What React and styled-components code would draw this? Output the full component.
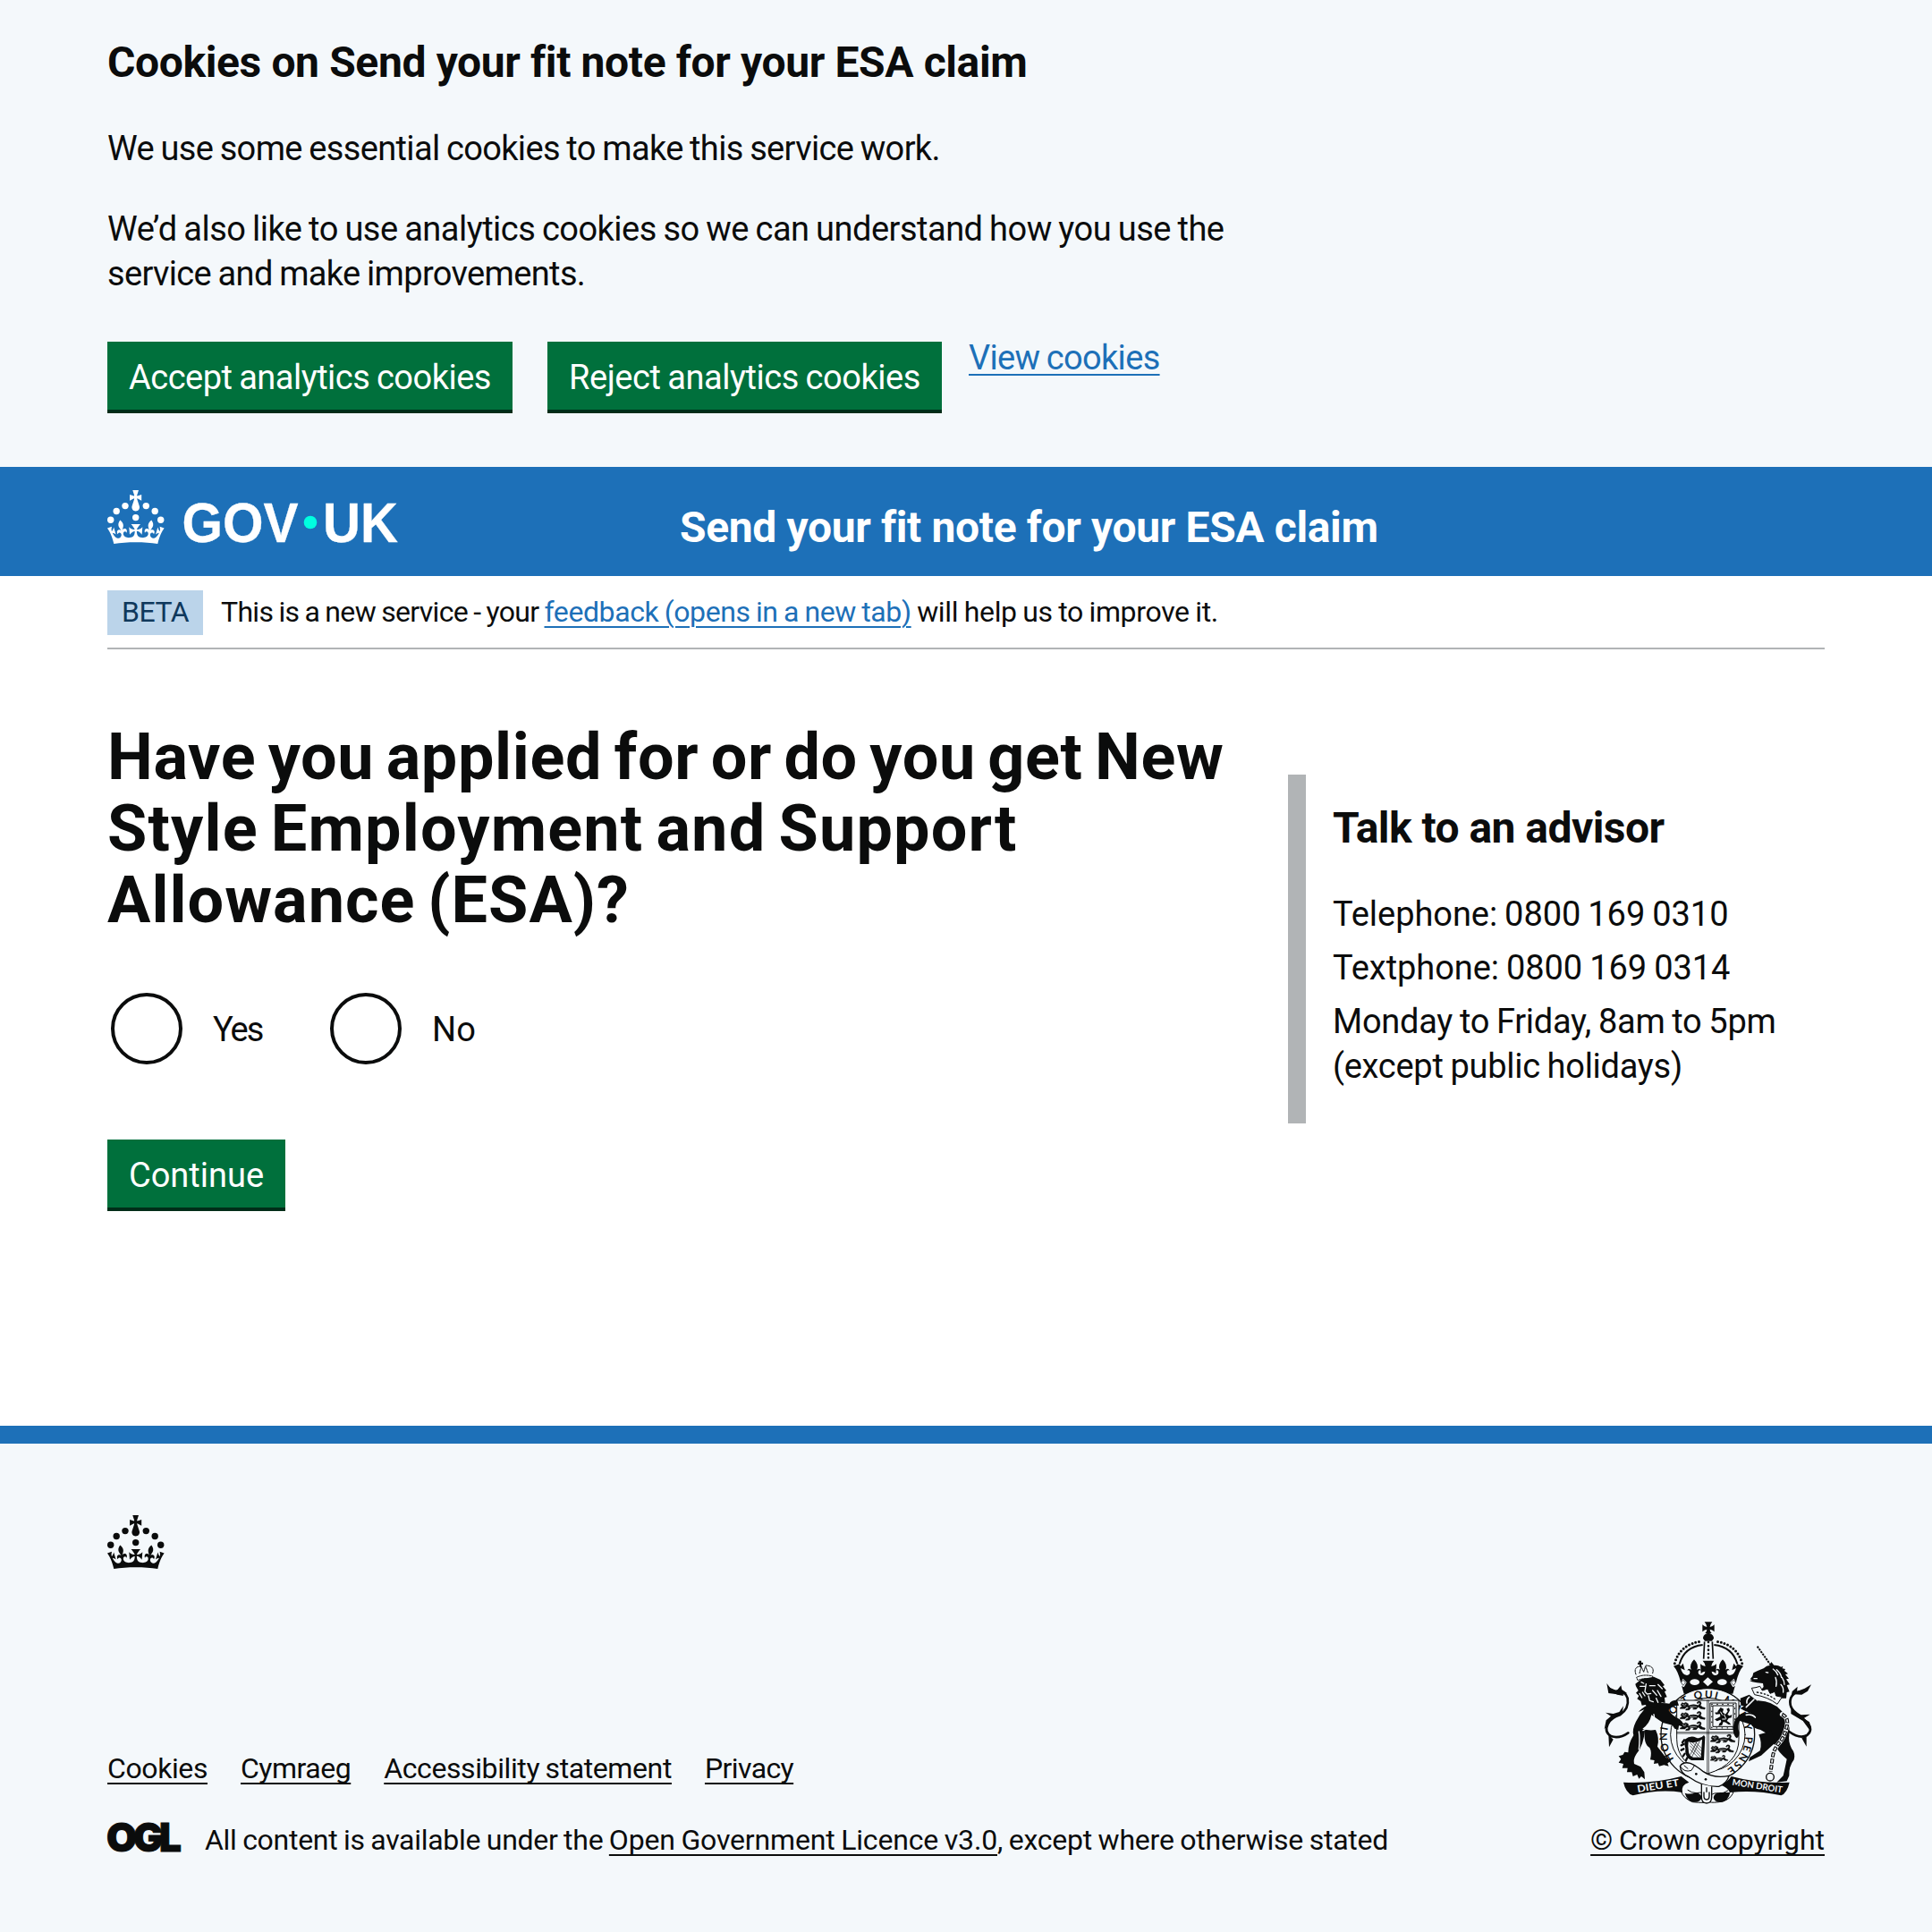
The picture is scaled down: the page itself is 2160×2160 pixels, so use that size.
import React from 'react';
import styled, { createGlobalStyle } from 'styled-components';

const c = {
  ink: '#0b0c0c',
  blue: '#1d70b8',
  pale: '#f4f8fb',
  green: '#00703c',
  greenShadow: '#002d18',
  grey: '#b1b4b6',
};

const GlobalStyle = createGlobalStyle`
  *, *::before, *::after { box-sizing: border-box; }
  body {
    margin: 0;
    background: ${c.pale};
    color: ${c.ink};
    font-family: Roboto, "Liberation Sans", Arial, sans-serif;
    -webkit-font-smoothing: antialiased;
  }
  h1, h2, p, ul { margin: 0; padding: 0; }
`;

const Container = styled.div`
  width: 1920px;
  margin: 0 auto;
`;

/* Keeps a run of text on one line with its own tracking. */
const Run = styled.span`
  display: ${(p) => (p.$block ? 'block' : 'inline')};
  letter-spacing: ${(p) => p.$track || 0}px;
  word-spacing: calc(var(--word-gap, -0.035) * 1em);
  white-space: pre;
`;

const BodyText = styled.p`
  padding-top: 1px;
  font-size: 38px;
  line-height: 50px;
  margin-bottom: ${(p) => (p.$gap ?? 40) - 1}px;
`;

const HeadingM = styled.h2`
  --word-gap: 0;
  font-size: 48px;
  line-height: 60px;
  font-weight: 700;
  margin-bottom: 40px;
`;

const HeadingXL = styled.h1`
  --word-gap: -0.07;
  padding-top: 1px;
  font-size: 72px;
  line-height: 80px;
  font-weight: 700;
  margin-bottom: 59px;
`;

const Link = styled.a`
  color: ${(p) => (p.$dark ? c.ink : c.blue)};
  text-decoration: underline;
  text-decoration-thickness: 2px;
  text-underline-offset: 5px;
  text-decoration-skip-ink: ${(p) => (p.$dark ? 'none' : 'auto')};
  letter-spacing: ${(p) => p.$track || 0}px;
  word-spacing: -0.035em;
  white-space: nowrap;
`;

const Button = styled.button`
  width: ${(p) => p.$width}px;
  height: 76px;
  padding: 3px 0 0;
  border: 0;
  border-radius: 0;
  background: ${c.green};
  box-shadow: 0 4px 0 ${c.greenShadow};
  color: #fff;
  font: 400 38px/38px Roboto, "Liberation Sans", Arial, sans-serif;
  letter-spacing: ${(p) => p.$track || 0}px;
  word-spacing: -0.035em;
  white-space: nowrap;
`;

const CookieBanner = styled.section`
  height: 522px;
  padding-top: 40px;
  background: ${c.pale};
`;

const ButtonGroup = styled.div`
  display: flex;
  align-items: flex-start;
  padding-top: 12px;
  font-size: 38px;
  line-height: 50px;

  ${Button} + ${Button} { margin-left: 39px; }
  ${Link} { margin: -7px 0 0 30px; }
`;

const Header = styled.header`
  height: 122px;
  background: ${c.blue};
  color: #fff;
`;

const HeaderRow = styled(Container)`
  display: flex;
  align-items: flex-start;
  padding-top: 26px;
`;

const Logo = styled.svg`
  display: block;
  overflow: visible;
  fill: currentColor;
`;

const ServiceName = styled.div`
  --word-gap: 0;
  margin: 12px 0 0 316px;
  font-size: 48px;
  line-height: 60px;
  font-weight: 700;
`;

const Page = styled.div`
  height: 950px;
  background: #fff;
`;

const PhaseBanner = styled.div`
  display: flex;
  align-items: flex-start;
  height: 82px;
  padding-top: 16px;
  border-bottom: 2px solid ${c.grey};
  font-size: 32px;
`;

const Tag = styled.strong`
  width: 107px;
  height: 50px;
  padding-left: 16px;
  background: #bbd4ea;
  color: #0f385c;
  font-weight: 400;
  line-height: 48px;
`;

const PhaseText = styled.p`
  margin: 4px 0 0 20px;
  line-height: 40px;
`;

const Columns = styled.main`
  display: grid;
  grid-template-columns: 1260px 600px;
  column-gap: 60px;
  padding-top: 80px;
`;

const Radios = styled.div`
  display: flex;
  gap: 36px;
  margin-bottom: 80px;
`;

const Radio = styled.label`
  display: flex;
  align-items: center;
  width: 209px;
  height: 88px;
  padding-left: 4px;
  font-size: 38px;
  line-height: 50px;

  ${Run} { padding-top: 2px; }
`;

const Dial = styled.span`
  width: 80px;
  height: 80px;
  margin-right: 34px;
  border: 4px solid ${c.ink};
  border-radius: 50%;
`;

const Aside = styled.aside`
  height: 390px;
  margin-top: 60px;
  padding: 30px 0 0 30px;
  border-left: 20px solid ${c.grey};
`;

const Footer = styled.footer`
  height: 566px;
  padding-top: 80px;
  border-top: 20px solid ${c.blue};
  background: ${c.pale};
`;

const FooterRow = styled.div`
  display: flex;
  justify-content: space-between;
  align-items: flex-end;
  margin-top: 46px;
  font-size: 32px;
  line-height: 40px;
`;

const FooterLinks = styled.div`
  display: flex;
  gap: 37px;
  margin-bottom: 40px;
`;

const Licence = styled.div`
  display: flex;
  align-items: flex-start;

  p { margin-left: 27px; }
`;

const Copyright = styled.div`
  display: flex;
  flex-direction: column;
  align-items: center;

  svg { display: block; margin: 0 0 7px; }
`;

function Crown() {
  return (
    <g>
      <circle cx="20" cy="17.6" r="3.7" />
      <circle cx="10.2" cy="23.5" r="3.7" />
      <circle cx="3.7" cy="33.2" r="3.7" />
      <circle cx="31.7" cy="30.6" r="3.7" />
      <circle cx="43.3" cy="17.6" r="3.7" />
      <circle cx="53.2" cy="23.5" r="3.7" />
      <circle cx="59.7" cy="33.2" r="3.7" />
      <path d="M33.1,9.8c.2-.1.3-.3.5-.5l4.6,2.4v-6.8l-4.6,1.5c-.1-.2-.3-.3-.5-.5l1.9-5.9h-6.7l1.9,5.9c-.2.1-.3.3-.5.5l-4.6-1.5v6.8l4.6-2.4c.1.2.3.3.5.5l-2.6,8c-.9,2.8,1.2,5.7,4.1,5.7h0c3,0,5.1-2.9,4.1-5.7l-2.6-8ZM37,37.9s-3.4,3.8-4.1,6.1c2.2,0,4.2-.5,6.4-2.8l-.7,8.5c-2-2.8-4.4-4.1-5.7-3.8.1,3.1.5,6.7,5.8,7.2,3.7.3,6.7-1.5,7-3.8.4-2.6-2-4.3-3.7-1.6-1.4-4.5,2.4-6.1,4.9-3.2-1.9-4.5-1.8-7.7,2.4-10.9,3,4,2.6,7.3-1.2,11.1,2.4-1.3,6.2,0,4,4.6-1.2-2.8-3.7-2.2-4.2.2-.3,1.7.7,3.7,3,4.2,1.9.3,4.7-.9,7-5.9-1.3,0-2.4.7-3.9,1.7l2.4-8c.6,2.3,1.4,3.7,2.2,4.5.6-1.6.5-2.8,0-5.3l5,1.8c-2.6,3.6-5.2,8.7-7.3,17.5-7.4-1.1-15.7-1.7-24.5-1.7h0c-8.8,0-17.1.6-24.5,1.7-2.1-8.9-4.7-13.9-7.3-17.5l5-1.8c-.5,2.5-.6,3.7,0,5.3.8-.8,1.6-2.3,2.2-4.5l2.4,8c-1.5-1-2.6-1.7-3.9-1.7,2.3,5,5.2,6.2,7,5.9,2.3-.4,3.3-2.4,3-4.2-.5-2.4-3-3.1-4.2-.2-2.2-4.6,1.6-6,4-4.6-3.7-3.7-4.2-7.1-1.2-11.1,4.2,3.2,4.3,6.4,2.4,10.9,2.5-2.8,6.3-1.3,4.9,3.2-1.8-2.7-4.1-1-3.7,1.6.3,2.3,3.3,4.1,7,3.8,5.4-.5,5.7-4.2,5.8-7.2-1.3-.2-3.7,1-5.7,3.8l-.7-8.5c2.2,2.3,4.2,2.7,6.4,2.8-.7-2.3-4.1-6.1-4.1-6.1h10.6,0Z" />
    </g>
  );
}

const wordmark = {
  fontFamily: '"Liberation Sans", Arial, sans-serif',
  fontWeight: 700,
  fontSize: 63,
  stroke: 'currentColor',
  strokeWidth: 0.3,
};

function GovLogo() {
  return (
    <Logo width="324" height="60" viewBox="0 0 324 60" role="img" aria-label="GOV.UK">
      <Crown />
      <text x="83.500" y="58" textLength="130" lengthAdjust="spacingAndGlyphs" {...wordmark}>GOV</text>
      <circle cx="227" cy="36" r="7.3" fill="#00ffe0" />
      <text x="241" y="58" textLength="84" lengthAdjust="spacingAndGlyphs" {...wordmark}>UK</text>
    </Logo>
  );
}

function OglMark() {
  return (
    <Logo width="82" height="34" viewBox="0 0 82 34" role="img" aria-label="Open Government Licence">
      <text
        x="-1"
        y="32.8"
        textLength="84"
        fontFamily="Inter, sans-serif"
        fontWeight="900"
        fontSize="44"
        stroke={c.ink}
        strokeWidth="1"
      >
        OGL
      </text>
    </Logo>
  );
}

/* One lion passant of the English quarters. */
function Passant({ x, y, s = 1 }) {
  return (
    <g transform={`translate(${x} ${y}) scale(${s})`}>
      <path d="M0 9l5-7 6 2 6-3 8 4 1 7q18-7 32-1 8-4 6-9-6-2-6 3l-4-2q3-8 12-5 6 5 0 13l8 6 8 2-1 5-14-2-8-6-7 8h-11l2-4 6-2q-8 1-14-1l-6 9-12 1 1-4 7-2 1-6q-8 1-12 7H-2l1-4 7-3-6-5z" stroke={c.ink} strokeWidth="1.500" />
      <path d="M5 8h6M14 7h5M9 12h8M30 16q12-4 24 0" stroke={c.pale} strokeWidth="1.8" fill="none" />
    </g>
  );
}

function CrownHalf() {
  return (
    <g>
      <path d="M280 179Q298 114 370 105" fill="none" stroke={c.ink} strokeWidth="9" strokeLinecap="round" strokeDasharray="0 11.6" />
      <path d="M296 181Q312 124 374 117" fill="none" stroke={c.ink} strokeWidth="6" />
      <path d="M393 170h-19q9 10 9 19-11-1-17-8l2 32q7-7 14-7-1 12-13 13-11-1-10-12 2-7 9-4-4-11-13-2 7-18-10-35-17 17-10 35-9-9-13 2 7-3 9 4 1 11-10 12-16-2-21-24l14 7-6-23-8 10-4-8-20 7q15 15 25 57l10 36h84z" />
      <ellipse cx="347" cy="242" rx="16" ry="10" fill={c.pale} />
      <path d="M308 230l12 13-9 16-15-8z" fill={c.pale} />
      <path d="M301 242l9-7 6 9-8 9z" fill="none" stroke={c.ink} strokeWidth="2" />
    </g>
  );
}

function Crest() {
  const line = { fill: 'none', stroke: c.ink, strokeLinecap: 'round', strokeLinejoin: 'round' };
  const white = { fill: 'none', stroke: c.pale, strokeLinecap: 'round' };
  const letters = { fontFamily: 'Lato, sans-serif', fontWeight: 700 };
  return (
    <svg width="260" height="230" viewBox="0 0 780 690" fill={c.ink} role="img" aria-label="Royal coat of arms">
      <defs>
        <path id="garter" d="M278 500A131 130 0 1 1 452 537" />
      </defs>

      {/* crown */}
      <path d="M380 40h26q-8 10-8 17 8 0 15-8v24q-7-8-15-8 0 8 6 13h-22q6-5 6-13-8 0-15 8V49q7 8 15 8 0-7-8-17z" />
      <path d="M393 78c10 0 18 8 18 17l-6 9h-24l-6-9c0-9 8-17 18-17z" />
      <path d="M380 106l-3 58M406 106l3 58" stroke={c.ink} strokeWidth="5" />
      <path d="M393 108v56" stroke={c.ink} strokeWidth="8" strokeLinecap="round" strokeDasharray="0 13" />
      <CrownHalf />
      <g transform="translate(786 0) scale(-1 1)"><CrownHalf /></g>
      <path d="M391 226l17 15-17 15-16-15z" fill={c.pale} />

      {/* tails */}
      <path d="M124 412Q96 432 68 424 42 410 56 382 66 362 96 352 128 330 122 296 114 270 86 272" {...line} strokeWidth="8" />
      <path d="M52 246l14 18 20 6 14-17 3 14 17 12-16 6-22-3-24-3z" />
      <path d="M58 258q6 20 30 26l20 4-4-10-26-10z" />
      <path d="M44 400l6-30 16-14-18-12 26 4 20-6 14-20-4 24-34 20-10 14zM58 418l2 42 14-26z" />
      <path d="M664 408Q700 434 724 420 744 402 728 380 712 366 696 352 658 328 670 294 682 270 706 276" {...line} strokeWidth="8" />
      <path d="M738 250l-12 22-20 12-24-1-12 12 4-22 18-16-2 16 26-10z" />
      <path d="M738 410l-6-34-20-12 22-14-30 2-22-10-12-20 0 26 40 24zM722 420l0 38-16-28z" />

      {/* garter */}
      <ellipse cx="391" cy="418" rx="157" ry="155" fill={c.pale} stroke={c.ink} strokeWidth="4" />
      <ellipse cx="391" cy="418" rx="125" ry="123" {...line} strokeWidth="3" />
      <text fontSize="35" {...letters}>
        <textPath href="#garter" textLength="620">HONI SOIT QUI MAL Y PENSE</textPath>
      </text>

      {/* shield */}
      <path d="M287 303h208v130q0 84-104 116-104-32-104-116z" fill={c.pale} stroke={c.ink} strokeWidth="3" />
      <path d="M389 303v243M287 410h208M394 303v243M287 414h208" {...line} strokeWidth="2" />
      <Passant x={300} y={309} />
      <Passant x={300} y={343} />
      <Passant x={300} y={377} />
      <Passant x={402} y={420} s={0.98} />
      <Passant x={402} y={455} s={0.92} />
      <Passant x={401} y={489} s={0.7} />
      <path d="M400 312h86v88h-86zM409 321h68v70h-68z" {...line} strokeWidth="3" />
      <path d="M404.500 316.500h77v79h-77z" {...line} strokeWidth="4" strokeDasharray="1 17" />
      <path d="M424 340l10-13 10 5-3 11 9 7 8-10-4-8 8-4 3 9-8 14 7 4 8-4-2 10-9 2-6 9 8 5 6 8-9-1-9-7-8-2-4 11-12 3 3-9 6-5-2-7-12 5-8-6 10-5 9-5-1-8-13 1-5-6 11-1z" />
      <path d="M434 342l6 10M446 352l6 12M440 366l10 0" {...white} strokeWidth="3" />
      <path d="M314 434q20-16 38-6 14 6 26-8l4 6-4 78h-42q-24-10-20-40-6-14-2-30zm12 8q-2 14 0 24 0 24 16 28h26l4-60q-22 16-46 8z" fillRule="evenodd" />
      <path d="M332 446l38 40M332 456l34 36M332 468l26 26M338 442l32 32M350 444l20 20M364 440l-26 52M354 442l-22 44" {...line} strokeWidth="2" />
      <path d="M312 436l-6 8M310 450l-8 4M310 466l-8 4M314 482l-6 8M322 496l-4 8" {...line} strokeWidth="7" />

      {/* lion supporter */}
      <path d="M158 342q20-22 46-28 40-4 58 0 6-12 26-12l6 18q-26 0-36 14 14 22 38 32l10 10-2 14-10-2-2 14-12-4-8-12-32-8-38-26q-6 30-30 46 20 8 44 4 14 28 6 56 14 18 28 36l18 12-12 8 4 10-16-4-16 4-4-10-14 2 2-12-14-2q6-26-2-40-22-12-16-62-4 56-28 82-12 18-8 34l22 10 12 18 2 24-12-10-8 8-6-14-14 6-4-14-16 0 2-14-18 0 4-14-16-4 8-12-8-10 14-4 6-10 12 2q0-30 18-58-6-18 8-46 12-24 28-40z" />
      <path d="M160 408q4 26 0 60M210 350q4 14 0 24M174 404q14-6 22-14" {...white} strokeWidth="4" />
      <path d="M148 248l20-16 42-8 22 10 14 18-6 4 12 14-6 4 8 18-8 2 2 18-12-2-4 16-12-8-8 12-12-8-10 6-8-10-12 2-4-14-12-8 6-10-10-10 8-8-8-14z" />
      <path d="M164 256h16M196 254h18M184 248l-4 26 8 8 12-2M172 276l8 12M192 288l4 16 12 4M206 270l14 16M224 250l14 14M222 270l12 20M218 296l6 14M162 280l8 14M176 246l-8-4" {...white} strokeWidth="4" />
      <path d="M152 226q24-12 54-4l2 10q-30-6-52 4zM150 216q-10-26 18-28M206 212q8-24-22-26M162 212l6-22 8 18 6-20 8 22" {...line} strokeWidth="3" strokeDasharray="6 3" />
      <path d="M160 170h8v6h6v7h-6v8h-6v-8h-6v-7h4z" />

      {/* unicorn supporter */}
      <path d="M500 330q28-20 60-26 50 2 78 34 32 32 26 82-4 20 8 44 14 18 8 38-18 24-16 54l-8 18-34 4 22-22q8-36 12-56-26-20-44-52-14-32-44-46-24-4-32-18l-38-12q-10 20-2 36 2 18-8 22-10-8-12-26 2-40 14-44 6-16 44-16-14-2-34-14z" />
      <path d="M562 418q24-4 42-16l12 44-28 26-18 16-42 20 4-14 34-22q8-26-4-54zM500 296l30-12 26 20-20 22-34-6z" />
      <path d="M530 292q-10 8-8 20M546 300l-26 26M520 352q20-4 30 8" {...white} strokeWidth="5" />
      <path d="M533 232l8-10 3-11q18-9 34-15 10-10 22-11l4-11 9 11q14-1 24 6l6-3-2 8 10 2-3 6 12 10-9 2 12 14-9 2 12 18-10 2 9 22-9 2-2 20-14 0q-24-14-74-24l12-14-2-12-20-2-16-3-9-4 9-2z" />
      <path d="M586 209l7 1M546 230l10 0M610 198q12 8 16 20M622 200q14 12 16 26M640 226q8 12 8 24M636 250q10 10 8 26M618 226q6 16 2 30" {...white} strokeWidth="4" />
      <path d="M538 262l10 22q46 8 76 32l16-24-20-4-4-14-16 6-8-16-18 6-8-14-14 4z" fill={c.pale} stroke={c.ink} strokeWidth="3" />
      <path d="M556 276q40 6 64 26" {...line} strokeWidth="4" strokeDasharray="4 8" />
      <path d="M557 122l46 64" stroke={c.ink} strokeWidth="6" strokeDasharray="7 3" />
      <path d="M640 350q24 10 16 42-10 38-26 54-18 20-22 50l-6 46" {...white} strokeWidth="15" />
      <path d="M640 350q24 10 16 42-10 38-26 54-18 20-22 50l-6 46" {...line} strokeWidth="12" strokeDasharray="16 5" strokeLinecap="butt" />
      <path d="M640 350q24 10 16 42-10 38-26 54-18 20-22 50l-6 46" {...white} strokeWidth="5" strokeDasharray="10 11" strokeDashoffset="-3" strokeLinecap="butt" />
      <circle cx="600" cy="560" r="13" fill="none" stroke={c.ink} strokeWidth="4" />

      {/* motto scroll */}
      <path d="M108 578q96 6 194-20l26 20q-28 8-22 34-80-12-166 10-24-8-32-44z" />
      <path d="M470 558q98 26 195 20-8 36-28 44-90-20-172-10-6-16-34-26 26-8 39-28z" />
      <path d="M302 610q8 22 38 34 40 4 48 0v-22q-12-14-34-8-18 0-30-10M478 604q-2 26-36 38-36 6-44 2v-20q14-14 34-8 12-2 26-10" {...line} strokeWidth="3" />
      <path d="M314 614q20 6 36-2 20 4 20 18-4 16-26 14-22-2-30-30zM466 612q-24 0-34 0-20 2-22 18 4 16 26 14 24-2 30-32z" />
      <path d="M298 524q10-16 34-10 20 8 44 28 34 24 86 14-6 24-34 36-54 2-100-32-28-10-30-36z" fill={c.pale} stroke={c.ink} strokeWidth="4" />
      <path d="M300 526q12 20 36 12l10-16M312 522l12 10" {...line} strokeWidth="3" />
      <circle cx="352" cy="550" r="4" />
      <circle cx="384" cy="568" r="4" />
      <path d="M370 584v44q0 20 17 20t17-20v-36" fill={c.pale} stroke={c.ink} strokeWidth="4" />
      <path d="M378 612v12q0 12 9 12t9-12v-12M387 596v14" {...line} strokeWidth="4" />
      <text x="156" y="612" fontSize="33" textLength="142" lengthAdjust="spacingAndGlyphs" fill={c.pale} transform="rotate(-9 156 612)" {...letters}>DIEU ET</text>
      <text x="472" y="587" fontSize="30" textLength="170" lengthAdjust="spacingAndGlyphs" fill={c.pale} transform="rotate(9 472 587)" {...letters}>MON DROIT</text>
    </svg>
  );
}

export default function App() {
  return (
    <>
      <GlobalStyle />
      <CookieBanner>
        <Container>
          <HeadingM><Run $track={-0.38}>Cookies on Send your fit note for your ESA claim</Run></HeadingM>
          <BodyText><Run $track={-0.65}>We use some essential cookies to make this service work.</Run></BodyText>
          <BodyText>
            <Run $block $track={-0.51}>We’d also like to use analytics cookies so we can understand how you use the</Run>
            <Run $block $track={-0.65}>service and make improvements.</Run>
          </BodyText>
          <ButtonGroup>
            <Button $width={453} $track={-0.5}>Accept analytics cookies</Button>
            <Button $width={441} $track={-0.44}>Reject analytics cookies</Button>
            <Link $track={-0.68}>View cookies</Link>
          </ButtonGroup>
        </Container>
      </CookieBanner>

      <Header>
        <HeaderRow>
          <GovLogo />
          <ServiceName><Run $track={-0.37}>Send your fit note for your ESA claim</Run></ServiceName>
        </HeaderRow>
      </Header>

      <Page>
        <Container>
          <PhaseBanner>
            <Tag><Run $track={-0.5}>BETA</Run></Tag>
            <PhaseText>
              <Run $track={-0.68}>This is a new service - your </Run>
              <Link $track={-0.41}>feedback (opens in a new tab)</Link>
              <Run $track={-0.33}> will help us to improve it.</Run>
            </PhaseText>
          </PhaseBanner>

          <Columns>
            <div>
              <HeadingXL>
                <Run $block $track={0.62}>Have you applied for or do you get New</Run>
                <Run $block $track={1.18}>Style Employment and Support</Run>
                <Run $block $track={1.02}>Allowance (ESA)?</Run>
              </HeadingXL>
              <Radios>
                <Radio><Dial /><Run $track={-2}>Yes</Run></Radio>
                <Radio><Dial /><Run $track={0.2}>No</Run></Radio>
              </Radios>
              <Button $width={199}>Continue</Button>
            </div>
            <Aside>
              <HeadingM><Run $track={-0.55}>Talk to an advisor</Run></HeadingM>
              <BodyText $gap={10}><Run $track={-0.06}>Telephone: 0800 169 0310</Run></BodyText>
              <BodyText $gap={10}><Run $track={-0.06}>Textphone: 0800 169 0314</Run></BodyText>
              <BodyText $gap={10}>
                <Run $block $track={-0.26}>Monday to Friday, 8am to 5pm</Run>
                <Run $block $track={-0.27}>(except public holidays)</Run>
              </BodyText>
            </Aside>
          </Columns>
        </Container>
      </Page>

      <Footer>
        <Container>
          <Logo width="64" height="60" viewBox="0 0 64 60" aria-hidden="true"><Crown /></Logo>
          <FooterRow>
            <div>
              <FooterLinks>
                <Link $dark $track={-0.4}>Cookies</Link>
                <Link $dark $track={-0.48}>Cymraeg</Link>
                <Link $dark $track={-0.4}>Accessibility statement</Link>
                <Link $dark $track={-0.6}>Privacy</Link>
              </FooterLinks>
              <Licence>
                <OglMark />
                <p>
                  <Run $track={-0.28}>All content is available under the </Run>
                  <Link $dark $track={-0.17}>Open Government Licence v3.0</Link>
                  <Run $track={-0.22}>, except where otherwise stated</Run>
                </p>
              </Licence>
            </div>
            <Copyright>
              <Crest />
              <Link $dark $track={-0.05}>© Crown copyright</Link>
            </Copyright>
          </FooterRow>
        </Container>
      </Footer>
    </>
  );
}
